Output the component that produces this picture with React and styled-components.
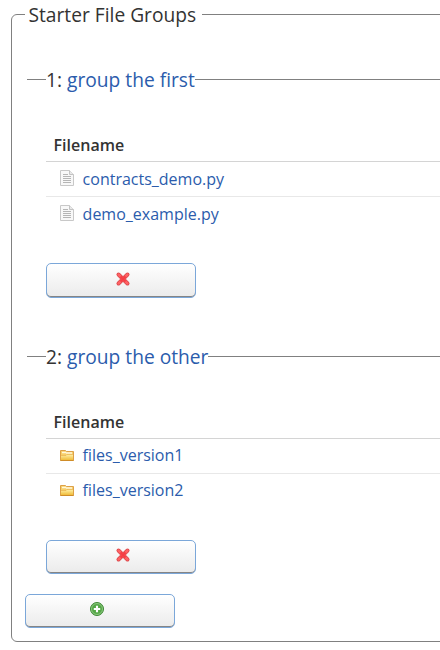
import React from "react";
import styled, { createGlobalStyle } from "styled-components";

const GlobalStyle = createGlobalStyle`
  * { box-sizing: border-box; }
  html, body { margin: 0; height: 650px; overflow: hidden; background: #fff; }
  body { font-family: "Open Sans", "Noto Sans", sans-serif; color: #333; }
`;

const Viewport = styled.main`
  height: 650px;
  overflow: hidden;
`;

const Panel = styled.fieldset`
  width: 480px;
  height: 642px;
  margin: 0 0 0 11px;
  padding: 36px 13px 13px;
  border: 1px solid #808080;
  border-radius: 6px;
`;

const PanelTitle = styled.legend`
  width: 177px;
  padding: 0 0 0 3.5px;
  font-size: 19.2px;
  line-height: 29px;
  white-space: nowrap;
`;

const Group = styled.fieldset`
  height: 233px;
  margin: 0 0 44px 2px;
  padding: 35px 0 0 19px;
  border: 0;
  border-top: 1px solid #808080;

  &:last-of-type { margin-bottom: 19px; }
`;

const GroupTitle = styled.legend`
  padding: 0;
  font-size: 19.2px;
  line-height: 29px;
  white-space: nowrap;
`;

const Link = styled.a`
  color: #2b5cac;
  text-decoration: none;
`;

const FileTable = styled.div`
  display: flex;
  flex-direction: column;
  margin-bottom: 31px;
`;

const HeaderRow = styled.div`
  height: 33px;
  padding-left: 7.6px;
  border-bottom: 1px solid #d4d4d4;
  font-size: 16px;
  font-weight: 600;
  line-height: 32px;
`;

const FileRow = styled.div`
  display: flex;
  align-items: center;
  gap: 7.6px;
  height: 35px;
  padding: 0 0 ${(p) => (p.$raised ? 2 : 0)}px 13px;
  border-bottom: 1px solid #e8e8e8;
  font-size: 16px;
  line-height: ${(p) => (p.$raised ? 32 : 34)}px;

  &:last-child { border-bottom-color: transparent; }
`;

const Button = styled.button`
  display: flex;
  align-items: center;
  justify-content: center;
  width: 150px;
  height: ${(p) => p.$height || 34}px;
  padding: 0 ${(p) => p.$right || 0}px ${(p) => p.$lift ?? 2}px ${(p) => p.$left || 0}px;
  border: 1px solid #7ba7d9;
  border-radius: 5px;
  background: linear-gradient(#fff, #ebebeb);
  box-shadow: inset 0 -1px 0 #858585;
`;

const Icon = styled.svg`
  display: block;
  flex: none;
  width: 16px;
  height: 16px;
`;

const FileMark = styled(Icon)`
  margin-bottom: ${(p) => p.$lift || 0}px;
`;

const DocumentIcon = () => (
  <FileMark viewBox="0 0 16 16" $lift={2}>
    <path d="M1.5.5h9l4 4v11h-13z" fill="#f8f8f8" stroke="#c8c8c8" />
    <path d="M10.5.5v4h4" fill="#e9e9e9" stroke="#c3c3c3" />
    <path d="M4 4.5h5M4 6.5h8M4 8.5h8M4 10.5h8M4 12.5h8" stroke="#b5b5b5" />
  </FileMark>
);

const FolderIcon = () => (
  <FileMark viewBox="0 0 16 16">
    <defs>
      <linearGradient id="folderFill" x2="0" y2="1">
        <stop stopColor="#fff1a8" />
        <stop offset="1" stopColor="#f0bc3a" />
      </linearGradient>
    </defs>
    <path d="M1.5 13.5v-10h5l1 1h7v9z" fill="#f7cf69" stroke="#dda047" />
    <path d="M3 5.5h4M7 6h6" stroke="#fff8dc" strokeWidth="1.5" />
    <path d="M2 13V8.5h5l1-1h6V13z" fill="url(#folderFill)" />
    <path d="M2 8.5h5l1-1h6" fill="none" stroke="#e5ad49" strokeWidth=".6" />
    <path d="M1.5 13.5h13" stroke="#cf8c28" />
  </FileMark>
);

const DeleteIcon = () => (
  <Icon viewBox="0 0 16 16">
    <path d="M3.5 3.5l9 9m0-9l-9 9" stroke="#dc4a4d" strokeWidth="4" strokeLinecap="round" />
    <path d="M3.6 3.6l8.8 8.8m0-8.8l-8.8 8.8" stroke="#ff6265" strokeWidth="2.6" strokeLinecap="round" />
    <path d="M5.5 5.5l5 5m0-5l-5 5" stroke="#f53d44" strokeWidth="2" />
  </Icon>
);

const AddIcon = () => (
  <Icon viewBox="0 0 16 16">
    <circle cx="8" cy="8" r="6.5" fill="#55a747" stroke="#3f8936" />
    <circle cx="8" cy="8" r="5.5" fill="none" stroke="#9bcf8e" strokeWidth=".8" />
    <path d="M8 4.8v6.4M4.8 8h6.4" stroke="#fff" strokeWidth="2.1" />
  </Icon>
);

const groups = [
  { name: "group the first", files: ["contracts_demo.py", "demo_example.py"], FileIcon: DocumentIcon },
  { name: "group the other", files: ["files_version1", "files_version2"], FileIcon: FolderIcon, raised: true },
];

export default function App() {
  return (
    <Viewport>
      <GlobalStyle />
      <Panel>
        <PanelTitle>Starter File Groups</PanelTitle>
        {groups.map(({ name, files, FileIcon, raised }, index) => (
          <Group key={name}>
            <GroupTitle>{index + 1}: <Link>{name}</Link></GroupTitle>
            <FileTable>
              <HeaderRow>Filename</HeaderRow>
              {files.map((file) => (
                <FileRow key={file} $raised={raised}>
                  <FileIcon />
                  <Link>{file}</Link>
                </FileRow>
              ))}
            </FileTable>
            <Button
              type="button"
              aria-label="Delete group"
              $left={4}
              $lift={raised ? 4 : 3}
              $height={raised ? 34 : 35}
            >
              <DeleteIcon />
            </Button>
          </Group>
        ))}
        <Button type="button" aria-label="Add group" $right={6} $lift={4}><AddIcon /></Button>
      </Panel>
    </Viewport>
  );
}
